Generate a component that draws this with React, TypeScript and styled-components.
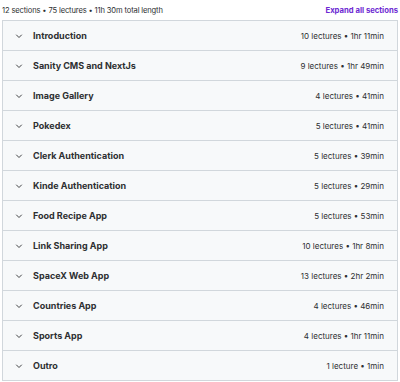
import React from "react";
import styled, { createGlobalStyle } from "styled-components";

const Global = createGlobalStyle`
  html, body { margin: 0; padding: 0; background: #ffffff; }
  body { font-family: Inter, "Noto Sans", sans-serif; color: #2d2f31; }
`;

const Page = styled.div`
  padding: 0 2px;
  width: 396px;
`;

const Header = styled.div`
  display: flex;
  justify-content: space-between;
  align-items: center;
  height: 20px;
`;

const Summary = styled.span`
  font-size: 7.6px;
  color: #2d2f31;
  letter-spacing: -0.15px;
`;

const ExpandLink = styled.button`
  border: 0;
  background: none;
  padding: 0;
  font-family: inherit;
  font-size: 7.7px;
  font-weight: 700;
  color: #6d28d2;
  cursor: pointer;
`;

const List = styled.div`
  border: 1px solid #d1d7dc;
  border-bottom: 0;
`;

const Row = styled.div`
  display: flex;
  align-items: center;
  height: 29px;
  background: #f7f9fa;
  border-bottom: 1px solid #d1d7dc;
  padding: 0 13px 0 12px;
`;

const Chevron = styled.svg`
  width: 8px;
  height: 8px;
  flex: none;
  margin-right: 10px;
`;

const Title = styled.span`
  flex: 1;
  font-size: 9px;
  font-weight: 700;
  color: #2d2f31;
`;

const Meta = styled.span`
  font-size: 8px;
  color: #2d2f31;
`;

const sections: [string, string][] = [
  ["Introduction", "10 lectures • 1hr 11min"],
  ["Sanity CMS and NextJs", "9 lectures • 1hr 49min"],
  ["Image Gallery", "4 lectures • 41min"],
  ["Pokedex", "5 lectures • 41min"],
  ["Clerk Authentication", "5 lectures • 39min"],
  ["Kinde Authentication", "5 lectures • 29min"],
  ["Food Recipe App", "5 lectures • 53min"],
  ["Link Sharing App", "10 lectures • 1hr 8min"],
  ["SpaceX Web App", "13 lectures • 2hr 2min"],
  ["Countries App", "4 lectures • 46min"],
  ["Sports App", "4 lectures • 1hr 11min"],
  ["Outro", "1 lecture • 1min"],
];

export default function App() {
  return (
    <>
      <Global />
      <Page>
        <Header>
          <Summary>12 sections • 75 lectures • 11h 30m total length</Summary>
          <ExpandLink>Expand all sections</ExpandLink>
        </Header>
        <List>
          {sections.map(([t, m]) => (
            <Row key={t}>
              <Chevron viewBox="0 0 8 8">
                <path d="M1.5 3 L4 5.5 L6.5 3" fill="none" stroke="#2d2f31" strokeWidth="0.9" strokeLinecap="round" strokeLinejoin="round" />
              </Chevron>
              <Title>{t}</Title>
              <Meta>{m}</Meta>
            </Row>
          ))}
        </List>
      </Page>
    </>
  );
}
